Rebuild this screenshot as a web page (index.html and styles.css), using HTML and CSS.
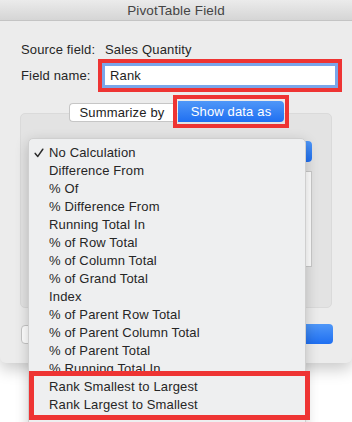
FILE: index.html
```html
<!DOCTYPE html>
<html>
<head>
<meta charset="utf-8">
<link rel="stylesheet" href="styles.css">
</head>
<body>
<div class="dialog">
  <div class="titlebar">PivotTable Field</div>
  <div class="content">
    <div class="row-source">
      <span class="label">Source field:</span>
      <span class="value">Sales Quantity</span>
    </div>
    <div class="row-name">
      <span class="label name-label">Field name:</span>
      <div class="hl hl-input">
        <div class="input">Rank</div>
      </div>
    </div>
    <div class="tabs">
      <div class="tab tab-left">Summarize by</div>
      <div class="hl hl-tab">
        <div class="tab tab-active">Show data as</div>
      </div>
    </div>
    <div class="groupbox">
      <div class="popup"><span class="popup-end"></span></div>
      <div class="listbox"></div>
    </div>
    <div class="buttons">
      <div class="btn btn-cancel"></div>
      <div class="btn btn-ok"></div>
    </div>
  </div>
  <div class="menu">
    <div class="item checked"><svg class="check" width="10" height="10" viewBox="0 0 10 10"><path d="M1.2 5.4 L3.8 8.4 L8.8 1.2" fill="none" stroke="#2b2b2b" stroke-width="1.5" stroke-linecap="round" stroke-linejoin="round"/></svg>No Calculation</div>
    <div class="item">Difference From</div>
    <div class="item">% Of</div>
    <div class="item">% Difference From</div>
    <div class="item">Running Total In</div>
    <div class="item">% of Row Total</div>
    <div class="item">% of Column Total</div>
    <div class="item">% of Grand Total</div>
    <div class="item">Index</div>
    <div class="item">% of Parent Row Total</div>
    <div class="item">% of Parent Column Total</div>
    <div class="item">% of Parent Total</div>
    <div class="item">% Running Total In</div>
    <div class="hl hl-menu">
      <div class="item">Rank Smallest to Largest</div>
      <div class="item">Rank Largest to Smallest</div>
    </div>
  </div>
</div>
</body>
</html>
```

FILE: styles.css
```css
html, body {
  margin: 0;
  padding: 0;
  overflow: hidden;
}
body {
  width: 352px;
  height: 422px;
  background: linear-gradient(#e9e9e9, #f7f7f7 30px, #ffffff 60px);
  font-family: "Liberation Sans", Arial, sans-serif;
  font-size: 13px;
  letter-spacing: 0.15px;
  color: #262626;
}
.dialog {
  position: relative;
  width: 352px;
  height: 363px;
  background: #ececec;
  border-radius: 0 0 6px 6px;
  box-shadow: 0 6px 16px rgba(0, 0, 0, 0.22);
}
.titlebar {
  height: 20px;
  line-height: 21px;
  text-align: center;
  font-size: 13.5px;
  color: #444;
  background: linear-gradient(#ebebeb, #d5d5d5);
  border-bottom: 1px solid #c4c4c4;
}
.row-source {
  margin-top: 21px;
  height: 16px;
  line-height: 16px;
  padding-left: 21px;
  display: flex;
}
.row-source .label {
  width: 84px;
}
.row-name {
  margin-top: 1px;
  display: flex;
  align-items: center;
  padding-left: 21px;
}
.name-label {
  width: 77px;
}
.hl {
  border: 4px solid #ee3433;
  box-sizing: border-box;
}
.hl-input {
  width: 244px;
  height: 33px;
}
.input {
  height: 25px;
  box-sizing: border-box;
  border: 3px solid #7aa6ea;
  background: #fff;
  padding-left: 5px;
  line-height: 19px;
  color: #1e1e1e;
}
.tabs {
  position: relative;
  z-index: 1;
  margin-top: 3px;
  display: flex;
  align-items: flex-start;
  padding-left: 69px;
}
.tab {
  box-sizing: border-box;
  height: 19px;
  line-height: 18px;
  text-align: center;
}
.tab-left {
  margin-top: 8px;
  width: 105px;
  background: #fff;
  border: 1px solid #c6c6c6;
  border-right: none;
  border-radius: 4px 0 0 4px;
  color: #222;
}
.hl-tab {
  margin-left: -1px;
  width: 116px;
  height: 33px;
  padding: 2px 1px;
}
.tab-active {
  height: 21px;
  line-height: 21px;
  color: #fff;
  background: linear-gradient(#4f97f8, #1f6ff1);
  border-radius: 0 4px 4px 0;
}
.groupbox {
  margin: -15px 0 0 20px;
  width: 312px;
  height: 195px;
  box-sizing: border-box;
  background: #e3e3e3;
  border: 1px solid #dadada;
  border-radius: 5px;
  padding-top: 27px;
}
.popup {
  margin-left: 10px;
  width: 281px;
  height: 21px;
  background: #fff;
  border-radius: 4px;
  display: flex;
  justify-content: flex-end;
}
.popup-end {
  width: 16px;
  height: 21px;
  background: linear-gradient(#4f97f8, #1f6ff1);
  border-radius: 0 4px 4px 0;
}
.listbox {
  margin: 9px 0 0 20px;
  width: 271px;
  height: 96px;
  box-sizing: border-box;
  background: #fff;
  border: 1px solid #c9c9c9;
}
.buttons {
  margin-top: 16px;
  padding: 0 19px 0 21px;
  display: flex;
  justify-content: space-between;
  align-items: center;
}
.btn {
  box-sizing: border-box;
  height: 19px;
  border-radius: 4px;
  width: 80px;
}
.btn-cancel {
  background: #fff;
  border: 1px solid #c6c6c6;
}
.btn-ok {
  height: 20px;
  background: linear-gradient(#4f97f8, #1f6ff1);
}
.menu {
  position: absolute;
  left: 28px;
  top: 138px;
  width: 278px;
  height: 300px;
  box-sizing: border-box;
  padding-top: 5px;
  background: #eeeff0;
  border: 1px solid #cfcfcf;
  border-radius: 5px 5px 0 0;
  box-shadow: 0 4px 14px rgba(0, 0, 0, 0.2);
  color: #262626;
}
.item {
  height: 18px;
  line-height: 18px;
  padding-left: 20px;
  white-space: nowrap;
  position: relative;
}
.check {
  position: absolute;
  left: 5px;
  top: 4px;
}
.hl-menu {
  margin: -7px -5px 0 0;
  padding: 2px 0 1px 0;
  border-width: 5px;
  background: #eeeff0;
  position: relative;
}
.hl-menu .item {
  padding-left: 15px;
}
```
